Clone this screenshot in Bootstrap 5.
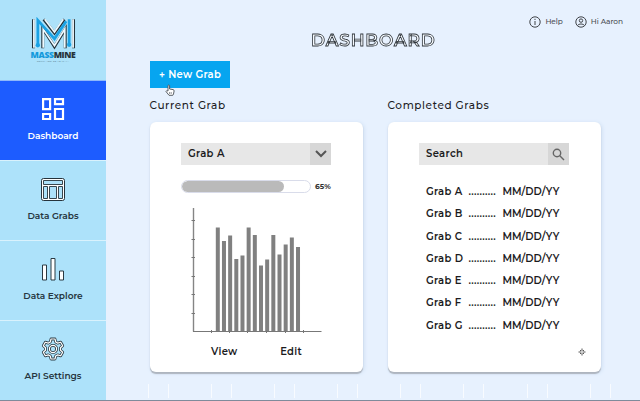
<!DOCTYPE html>
<html lang="en">
<head>
<meta charset="utf-8">
<meta name="viewport" content="width=device-width, initial-scale=1">
<title>MassMine Dashboard</title>
<link href="https://cdn.jsdelivr.net/npm/bootstrap@5.3.0/dist/css/bootstrap.min.css" rel="stylesheet">
<style>
  body { font-family: Montserrat, Inter, sans-serif; font-size: 10px; line-height: 12px; color: #1c1c1e; background: #e7f1fe; }
  .app { width: 640px; height: 401px; border-bottom: 1px solid #7f8b9b; }
  .side { width: 106px; background: #ade2fa; }
  .brand { height: 80px; padding-top: 17px; }
  .brand-name { font-family: "Open Sans", sans-serif; font-size: 8.6px; line-height: 9px; font-weight: 800; letter-spacing: -.35px; margin-top: 1px; color: #26333b; }
  .brand-name span { color: #1499dc; }
  .brand-tag { font-size: 2.5px; line-height: 3px; letter-spacing: .15px; color: #40586a; }
  .side-link { height: 80px; padding-top: 16px; font-size: 9px; font-weight: 600; color: #263640; text-decoration: none; border-top: 1px solid #d9f2fd; }
  .side-link svg { margin-bottom: 9px; }
  .side-link.current { background: #1d5cff; color: #fff; border-color: #8fb8fa; }
  .main { padding: 0 39px 0 44px; background: repeating-linear-gradient(90deg, transparent 0 42px, #f8fbff 42px 43px, transparent 43px 62px, #f8fbff 62px 63px, transparent 63px 63.1px) 0 384px / 100% 14px no-repeat; }
  .topbar { height: 28px; padding-top: 15px; margin-right: -22px; font-size: 7.4px; letter-spacing: -.05px; color: #4a4d52; font-weight: 500; gap: 12px; }
  .title { height: 24px; font-size: 17px; line-height: 24px; font-weight: 600; letter-spacing: .8px; color: #f7fbff; -webkit-text-stroke: .8px #30363c; padding-left: 161px; will-change: transform; }
  .btn-grab { width: 80px; height: 27px; margin-top: 9px; background: #06a5f0; color: #fff; font-size: 10px; line-height: 12px; font-weight: 600; letter-spacing: .3px; }
  .hand { left: 15px; top: 23px; }
  .heading { font-size: 10.5px; line-height: 14px; font-weight: 500; letter-spacing: .6px; margin: 11px 0 9px -.5px; }
  .panel { width: 213px; height: 250px; border-radius: 6px; box-shadow: 0 1.5px 1px #aeb5bf, 1px 1px 4px #cbdcf1; padding: 21px 31px 0; }
  .field { width: 150px; height: 22px; background: #e7e7e7; padding-left: 7px; font-weight: 600; letter-spacing: .35px; }
  .field-end { width: 21px; background: #d7d7d7; }
  .meter { width: 130px; height: 13px; border: 1px solid #d9dcea; border-radius: 7px; background: #fff; }
  .meter .progress-bar { background: #bababa; border-radius: 7px; }
  .pct { font-size: 7.5px; font-weight: 700; margin-top: 15px; color: #333; }
  .chart { margin: 13px 0 0 9px; }
  .links { padding: 11px 30px 0; font-weight: 600; letter-spacing: .3px; }
  .grabs { margin: 20px 0 0 7px; font-weight: 600; }
  .grabs li { height: 22.3px; line-height: 14px; }
  .g-name { width: 42.5px; letter-spacing: .3px; }
  .g-dots { width: 34px; letter-spacing: .32px; }
  .more { margin: 7px -16px 0 0; }
</style>
</head>
<body>
<div class="app d-flex overflow-hidden">
  <nav class="side d-flex flex-column flex-shrink-0">
    <div class="brand text-center">
      <svg class="d-block mx-auto" width="45" height="33" viewBox="0 0 46 33" fill="none">
        <path d="M2.500 31.500V2M12 31.500V11L24 30l11-18v19.500M13 2l11 14L34 2M43.500 31.500V2" stroke="#26333b" stroke-width="3"/>
        <path d="M3 31V2M12.500 31V12L24 29l10.500-17v19M14 2l10 13L33 2M43 31V2" stroke="#effaff" stroke-width="1.800"/>
        <path d="M7 28V3l17 19L36 4M39 27V2" stroke="#1ba2e4" stroke-width="2.800"/>
        <circle cx="7" cy="28.500" r="2.200" fill="#1ba2e4"/><circle cx="39" cy="28" r="2.200" fill="#1ba2e4"/>
      </svg>
      <div class="brand-name"><span>MASS</span>MINE</div>
      <div class="brand-tag">YOUR ACCESS TO DATA</div>
    </div>
    <a href="#" class="side-link current d-flex flex-column align-items-center">
      <svg width="24" height="24" viewBox="0 0 24 24" fill="none" stroke="#fff" stroke-width="2.200"><path d="M2.100 2.100h7v10h-7zM14 2.100h8v5h-8zM14 12h8v10h-8zM2.100 17h7v5h-7z"/></svg>
      Dashboard
    </a>
    <a href="#" class="side-link d-flex flex-column align-items-center">
      <svg width="24" height="24" viewBox="0 0 24 24" fill="#ade2fa" stroke="#26333b"><rect x=".5" y="1.500" width="23" height="22" rx="2" fill="#fff"/><path d="M2.500 3.500h19v4h-19zM2.500 9.500h4v12h-4zM8.500 9.500h7v12h-7zM17.500 9.500h4v12h-4z" stroke-width=".9"/></svg>
      Data Grabs
    </a>
    <a href="#" class="side-link d-flex flex-column align-items-center">
      <svg width="24" height="24" viewBox="0 0 24 24" fill="#fff" stroke="#2b3a43"><path d="M1.500 8h4v15h-4zM10 1.500h4V23h-4zM18.500 14h4v9h-4z"/></svg>
      Data Explore
    </a>
    <a href="#" class="side-link d-flex flex-column align-items-center">
      <svg width="24" height="24" viewBox="0 0 24 24" fill="none" stroke-linejoin="round">
        <g stroke="#2b3a43" stroke-width="2.800"><path id="cog" d="M10 2h4l.7 3 2 1.100 3-.9 2 3.500-2.200 2.100v2.400l2.200 2.100-2 3.500-3-.9-2 1.100-.7 3h-4l-.7-3-2-1.100-3 .9-2-3.500 2.200-2.100v-2.400L2.300 8.700l2-3.500 3 .9 2-1.100z"/><circle cx="12" cy="12" r="3.600"/></g>
        <g stroke="#fff" stroke-width="1.200"><use href="#cog"/><circle cx="12" cy="12" r="3.600"/></g>
      </svg>
      API Settings
    </a>
  </nav>
  <main class="main flex-grow-1">
    <div class="topbar d-flex justify-content-end">
      <div class="d-flex align-items-center gap-1">
        <svg width="12" height="12" viewBox="0 0 12 12" fill="none" stroke="#414449"><circle cx="6" cy="6" r="5.200"/><path d="M6 5v4M6 2.800v1.200"/></svg>Help
      </div>
      <div class="d-flex align-items-center gap-1">
        <svg width="12" height="12" viewBox="0 0 12 12" fill="none" stroke="#414449"><circle cx="6" cy="6" r="5.200"/><circle cx="6" cy="4.600" r="1.700"/><path d="M2.500 9.500c1.500-2 5.500-2 7 0"/></svg>Hi Aaron
      </div>
    </div>
    <h1 class="title m-0">DASHBOARD</h1>
    <div class="position-relative">
      <button type="button" class="btn btn-grab rounded-0 border-0 p-0 d-block">+ New Grab</button>
      <svg class="hand position-absolute" width="10" height="12" viewBox="0 0 10 12"><path d="M3 7V1.500q.8-1 1.600 0V5l3.600.6q1 .3.900 1.400L8.500 10l-.7 1.300H4L1 7.500q.3-1.300 2-.5z" fill="#fff" stroke="#4a4f55" stroke-width=".9"/><path d="M4.600 8v2M6.200 8v2" stroke="#4a4f55" stroke-width=".6"/></svg>
    </div>
    <div class="d-flex justify-content-between">
      <section>
        <h2 class="heading">Current Grab</h2>
        <div class="panel bg-white">
          <div class="field d-flex align-items-center justify-content-between">Grab A
            <span class="field-end h-100 d-flex align-items-center justify-content-center"><svg width="12" height="8" viewBox="0 0 12 8" fill="none" stroke="#555" stroke-width="2"><path d="M1 1l5 5 5-5"/></svg></span>
          </div>
          <div class="d-flex align-items-center pct">
            <div class="progress meter flex-shrink-0"><div class="progress-bar" style="width:79.500%"></div></div><span class="ps-1">65%</span>
          </div>
          <svg class="chart d-block" width="135" height="129" viewBox="190 206 135 129">
            <g id="bars" fill="#808080"></g>
            <path d="M193.500 208V331.500" stroke="#858585" stroke-width="1.400"/>
            <path d="M193 331.500H321.500M191.500 220.500h3.500M191.500 239.500h3.500M191.500 257.500h3.500M191.500 276.500h3.500M191.500 294.500h3.500M191.500 313.500h3.500M211.500 330v3M229.500 330v3M247.500 330v3M266.500 330v3M285.500 330v3M303.500 330v3" stroke="#777"/>
          </svg>
          <div class="links d-flex justify-content-between"><span>View</span><span>Edit</span></div>
        </div>
      </section>
      <section>
        <h2 class="heading">Completed Grabs</h2>
        <div class="panel bg-white">
          <div class="field d-flex align-items-center justify-content-between">Search
            <span class="field-end h-100 d-flex align-items-center justify-content-center"><svg width="13" height="13" viewBox="0 0 13 13" fill="none" stroke="#666" stroke-width="1.400"><circle cx="5" cy="5" r="3.700"/><path d="M7.800 7.800L12 12"/></svg></span>
          </div>
          <ul class="grabs list-unstyled mb-0">
            <li class="d-flex"><span class="g-name">Grab A</span><span class="g-dots">..........</span><span>MM/DD/YY</span></li>
            <li class="d-flex"><span class="g-name">Grab B</span><span class="g-dots">..........</span><span>MM/DD/YY</span></li>
            <li class="d-flex"><span class="g-name">Grab C</span><span class="g-dots">..........</span><span>MM/DD/YY</span></li>
            <li class="d-flex"><span class="g-name">Grab D</span><span class="g-dots">..........</span><span>MM/DD/YY</span></li>
            <li class="d-flex"><span class="g-name">Grab E</span><span class="g-dots">..........</span><span>MM/DD/YY</span></li>
            <li class="d-flex"><span class="g-name">Grab F</span><span class="g-dots">..........</span><span>MM/DD/YY</span></li>
            <li class="d-flex"><span class="g-name">Grab G</span><span class="g-dots">..........</span><span>MM/DD/YY</span></li>
          </ul>
          <div class="more d-flex justify-content-end"><svg width="8" height="8" viewBox="0 0 8 8" fill="none" stroke="#444" stroke-width=".9"><path d="M4 .5v7M.5 4h7M2 2l4 4M6 2L2 6"/><circle cx="4" cy="4" r="1" fill="#fff" stroke="none"/></svg></div>
        </div>
      </section>
    </div>
  </main>
</div>
<script src="https://cdn.jsdelivr.net/npm/bootstrap@5.3.0/dist/js/bootstrap.bundle.min.js"></script>
<script>
  const tops = [227.5, 241, 235.5, 259, 255.5, 227.5, 235, 265.5, 259.5, 235, 254.5, 244.5, 237.5, 247];
  document.getElementById('bars').innerHTML = tops.map((y, i) =>
    `<rect x="${215.8 + i * 6.17}" y="${y}" width="4" height="${331.5 - y}"/>`).join('');
</script>
</body>
</html>
